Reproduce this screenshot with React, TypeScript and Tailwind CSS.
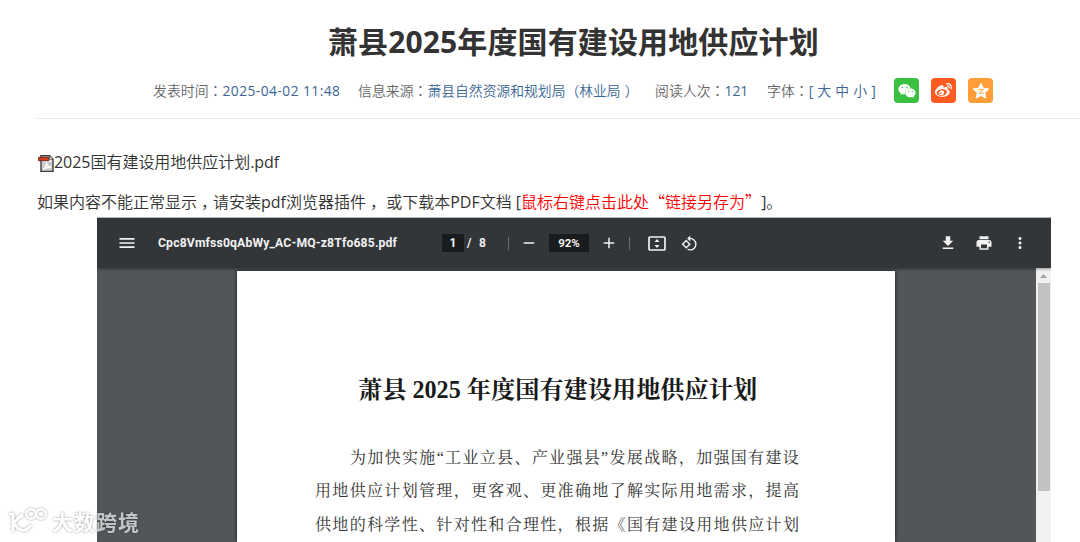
import { FaWeixin, FaWeibo } from 'react-icons/fa';
import { MdMenu, MdRemove, MdAdd, MdRotate90DegreesCcw, MdFileDownload, MdPrint, MdMoreVert } from 'react-icons/md';

const bodyLines = [
  '用地供应计划管理，更客观、更准确地了解实际用地需求，提高',
  '供地的科学性、针对性和合理性，根据《国有建设用地供应计划',
];

// Full-width colon that sits in the middle of its box
function Colon() {
  return <span className="font-['Noto_Sans_CJK_TC',sans-serif]">：</span>;
}

// Punctuation nudged right, towards the middle of its box
function Mark({ children }: { children: string }) {
  return <span className="pl-1 tracking-[-4px]">{children}</span>;
}

function StarIcon() {
  return (
    <svg className="w-[18px] h-[18px]" viewBox="0 0 18 18">
      <path
        fill="#fff"
        stroke="#fff"
        strokeWidth="1"
        strokeLinejoin="round"
        d="M9 1.2l2.3 5 5.5.7-4 3.8 1 5.5L9 13.5l-4.8 2.7 1-5.5-4-3.8 5.5-.7z"
      />
      <path fill="none" stroke="#ffb566" strokeWidth="1.1" d="M6.3 7.6h4.9L7.4 11.3h4.8" />
    </svg>
  );
}

function PdfFileIcon() {
  return (
    <svg className="w-4 h-[17px] mt-[2px]" viewBox="0 0 16 17">
      <path fill="#e9e9e9" stroke="#3b3b3b" strokeWidth="1.4" d="M3 .8h8.5L15 4.3v12H3z" />
      <path fill="#c9c9c9" d="M4 7h10v8.6H4z" />
      <path fill="none" stroke="#fff" strokeWidth="1.3" d="M5 14.5c2-1.5 3.5-4.5 3.5-7.5 0 3 2 5 5 5.5-3-.5-6 .5-8.5 2" />
      <path fill="#d8401a" stroke="#5a1a0c" strokeWidth=".8" d="M.4 2.4h10.3v3.3H.4z" />
      <path fill="#fff" stroke="#3b3b3b" strokeWidth=".8" d="M11.5.8v3.5H15z" />
    </svg>
  );
}

function FitPageIcon() {
  return (
    <svg className="w-[18px] h-[15px]" viewBox="0 0 18 15">
      <rect x="1" y="1" width="16" height="13" rx="1" fill="none" stroke="#f1f1f1" strokeWidth="1.7" />
      <path fill="#f1f1f1" d="M9 3l2.5 3h-5zM9 12l2.5-3h-5z" />
    </svg>
  );
}

function PdfToolbar() {
  return (
    <div className="relative z-10 flex items-center h-[50px] shrink-0 bg-[#323639] text-[#f1f1f1] font-[Roboto,sans-serif] text-[12px] font-bold shadow-[0_1px_3px_rgba(0,0,0,0.4)]">
      <MdMenu className="ml-5 w-5 h-5" />
      <span className="ml-[21px] w-[284px] text-[12.2px] tracking-[0.15px] whitespace-nowrap">Cpc8Vmfss0qAbWy_AC-MQ-z8Tfo685.pdf</span>
      <span className="w-[22px] h-[18px] leading-[18px] bg-[#191b1c] text-center">1</span>
      <span className="ml-[3px] w-[7px]">/</span>
      <span className="ml-[5px] w-[8px]">8</span>
      <span className="ml-[21px] w-px h-[13px] bg-[#6b6e70]" />
      <MdRemove className="ml-[11px] w-[18px] h-[18px]" />
      <span className="ml-[11px] w-[40px] h-[18px] leading-[18px] bg-[#191b1c] text-center text-[11.5px]">92%</span>
      <MdAdd className="ml-[11px] w-[18px] h-[18px]" />
      <span className="ml-[11px] w-px h-[13px] bg-[#6b6e70]" />
      <span className="ml-[18px]"><FitPageIcon /></span>
      <MdRotate90DegreesCcw className="ml-[15px] w-[17px] h-[17px]" />
      <div className="ml-auto mr-[22px] flex items-center gap-[18px]">
        <MdFileDownload className="w-[18px] h-[18px]" />
        <MdPrint className="w-[18px] h-[18px]" />
        <MdMoreVert className="w-[18px] h-[18px]" />
      </div>
    </div>
  );
}

function PdfViewer() {
  return (
    <div className="ml-[97px] w-[954px] h-[325px] flex flex-col overflow-hidden border-t border-[#b5b7b8]">
      <PdfToolbar />
      <div className="flex flex-1 min-h-0 bg-[#525659]">
        <div className="flex-1 flex">
          <div className="ml-[140px] mt-[3px] w-[658px] bg-white text-[#222] shadow-[0_0_4px_rgba(0,0,0,0.7)]">
            <h2 className="mt-[101px] ml-[121px] h-[36px] leading-[36px] whitespace-nowrap text-[24.2px] font-bold text-[#1a1a1a] font-['Liberation_Serif','Noto_Serif_CJK_SC','Noto_Sans_CJK_SC',serif]">
              萧县 2025 年度国有建设用地供应计划
            </h2>
            <div className="mt-[33px] ml-[78px] leading-[33.3px] whitespace-nowrap text-[16px] tracking-[1.33px] text-[#333] font-['Liberation_Serif','Noto_Serif_CJK_SC','Noto_Sans_CJK_SC',serif]">
              <p className="pl-[35px]">为加快实施“工业立县、产业强县”发展战略，加强国有建设</p>
              {bodyLines.map((line) => (
                <p key={line}>{line}</p>
              ))}
            </div>
          </div>
        </div>
        <div className="w-[15px] bg-[#f1f1f1] flex flex-col items-center">
          <svg className="w-[7px] h-[4px] mt-[6px]" viewBox="0 0 7 4">
            <path fill="#a3a3a3" d="M3.5 0L7 4H0z" />
          </svg>
          <div className="mt-[5px] w-3 h-[208px] bg-[#c1c1c1]" />
        </div>
      </div>
    </div>
  );
}

function Watermark() {
  return (
    <div className="absolute left-[8px] top-[503px] flex items-center text-white opacity-65 drop-shadow-[0_0_1px_rgba(0,0,0,0.6)]">
      <svg className="w-[40px] h-[30px]" viewBox="0 0 40 30" fill="none" stroke="#fff" strokeWidth="3">
        <path d="M1 8h4v18M6 17l7-8M7 18c3 7 11 9 16 1" />
        <circle cx="23" cy="8" r="4.8" strokeWidth="2.5" />
        <circle cx="33" cy="8" r="4.8" strokeWidth="2.5" />
        <circle cx="13" cy="10" r="1.5" strokeWidth="2" />
      </svg>
      <span className="ml-[4px] text-[21px] tracking-[1px] leading-[36px] font-bold font-['Noto_Sans_CJK_SC',sans-serif]">大数跨境</span>
    </div>
  );
}

export default function App() {
  return (
    <div className="relative w-[1080px] h-[542px] overflow-hidden bg-white font-['Open_Sans','Noto_Sans_CJK_SC',sans-serif]">
      <h1 className="pt-[19px] pl-[328px] h-[74px] leading-[45px] text-[30px] tracking-[0.12px] font-bold text-[#333] whitespace-nowrap">
        萧县2025年度国有建设用地供应计划
      </h1>

      <div className="ml-[37px] h-[45px] pl-[116px] flex items-start border-b border-[#e6e6e6] text-[13.9px] leading-[32px] text-[#666] whitespace-nowrap font-['Open_Sans','Noto_Sans_CJK_SC_DemiLight','Noto_Sans_CJK_SC',sans-serif]">
        <div className="w-[205px]">
          发表时间<Colon /><span className="text-[#3a6596] text-[13.8px] tracking-[0.45px]">2025-04-02 11:48</span>
        </div>
        <div className="w-[297px]">
          信息来源<Colon />
          <span className="text-[#3a6596] text-[13.8px]">萧县自然资源和规划局（林业局<Mark>）</Mark></span>
        </div>
        <div className="w-[112px]">
          阅读人次<Colon /><span className="text-[#3a6596]">121</span>
        </div>
        <div className="w-[127px]">
          字体<Colon /><span className="text-[#3a6596] tracking-[0.25px]">[ 大 中 小 ]</span>
        </div>
        <div className="flex gap-[12px] pt-[4px]">
          <span className="w-[25px] h-[25px] rounded-[4px] bg-[#3ac141] flex items-center justify-center">
            <FaWeixin className="w-[18px] h-[18px] text-white" />
          </span>
          <span className="w-[25px] h-[25px] rounded-[4px] bg-[#ff5a1f] flex items-center justify-center">
            <FaWeibo className="w-[17px] h-[17px] text-white" />
          </span>
          <span className="w-[25px] h-[25px] rounded-[4px] bg-[#ff9e38] flex items-center justify-center">
            <StarIcon />
          </span>
        </div>
      </div>

      <div className="pl-[38px] pt-[23px] text-[16px] leading-[40px] text-[#333] whitespace-nowrap font-['Open_Sans','Noto_Sans_CJK_SC_DemiLight','Noto_Sans_CJK_SC',sans-serif]">
        <p className="flex items-center h-[40px]">
          <PdfFileIcon />
          <span className="tracking-[-0.03px]">2025国有建设用地供应计划.pdf</span>
        </p>
        <p className="h-[35px] -ml-px leading-[39px]">
          如果内容不能正常显示<Mark>，</Mark>请安装pdf浏览器插件<Mark>，</Mark> 或下载本PDF文档 [
          <span className="text-[#f00]">
            鼠标右键点击此处<span className="font-['Noto_Sans_CJK_SC',sans-serif]">“</span>链接另存为
            <span className="font-['Noto_Sans_CJK_SC',sans-serif]">”</span>
          </span>
          <span className="pl-2">]。</span>
        </p>
      </div>

      <PdfViewer />
      <Watermark />
    </div>
  );
}
